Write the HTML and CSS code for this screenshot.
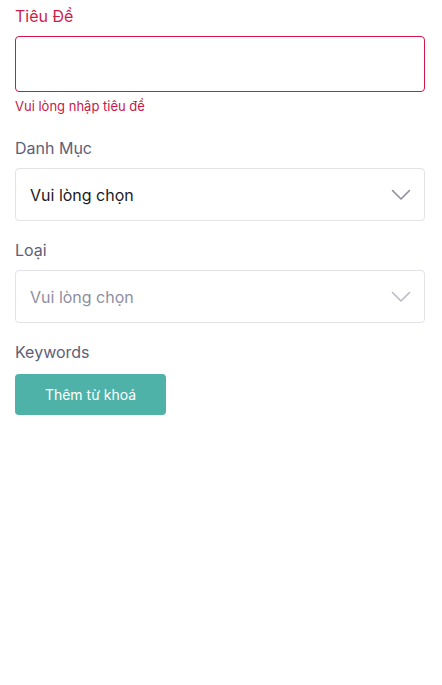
FILE: index.html
```html
<!DOCTYPE html>
<html lang="vi">
<head>
<meta charset="utf-8">
<link rel="stylesheet" href="styles.css">
</head>
<body>
<form class="form">
  <div class="field field-first">
    <label class="label label-error">Tiêu Đề</label>
    <div class="input input-error"></div>
    <div class="error-text">Vui lòng nhập tiêu đề</div>
  </div>
  <div class="field">
    <label class="label">Danh Mục</label>
    <div class="select">
      <span class="select-value">Vui lòng chọn</span>
      <svg class="chevron" width="20" height="12" viewBox="0 0 20 12"><path d="M1.5 1.5 L10 10 L18.5 1.5" fill="none" stroke="#8c8d9e" stroke-width="1.6" stroke-linecap="round" stroke-linejoin="round"/></svg>
    </div>
  </div>
  <div class="field">
    <label class="label">Loại</label>
    <div class="select">
      <span class="select-placeholder">Vui lòng chọn</span>
      <svg class="chevron" width="20" height="12" viewBox="0 0 20 12"><path d="M1.5 1.5 L10 10 L18.5 1.5" fill="none" stroke="#b9bac6" stroke-width="1.6" stroke-linecap="round" stroke-linejoin="round"/></svg>
    </div>
  </div>
  <div class="field">
    <label class="label">Keywords</label>
    <div class="actions"><button type="button" class="btn">Thêm từ khoá</button></div>
  </div>
</form>
</body>
</html>
```
FILE: styles.css
```css
* { box-sizing: border-box; }
html, body { margin: 0; padding: 0; background: #fff; }
body { font-family: Inter, "Noto Sans", sans-serif; }
.form { padding: 4px 17px 0 15px; display: flex; flex-direction: column; }
.field { display: flex; flex-direction: column; margin-bottom: 17px; }
.field-first { margin-bottom: 20px; }
.label { font-size: 16px; line-height: 24px; color: #5e6077; margin-bottom: 8px; }
.label-error { color: #cc1c4a; }
.input { height: 56px; border: 1px solid #e0e0e7; border-radius: 4px; }
.input-error { border-color: #d2164b; }
.error-text { font-size: 13px; line-height: 20px; color: #c81848; margin-top: 4px; }
.select { height: 53px; border: 1px solid #e2e2e8; border-radius: 4px; display: flex; align-items: center; justify-content: space-between; padding: 0 13px 0 14px; }
.select-value { font-size: 16px; color: #1a1a24; }
.select-placeholder { font-size: 16px; color: #8e8fa0; }
.chevron { display: block; }
.actions { margin-top: 2px; }
.btn { font-family: inherit; font-size: 14px; color: #fff; background: #4eb2a8; border: 0; border-radius: 4px; width: 151px; height: 41px; cursor: pointer; }
```
